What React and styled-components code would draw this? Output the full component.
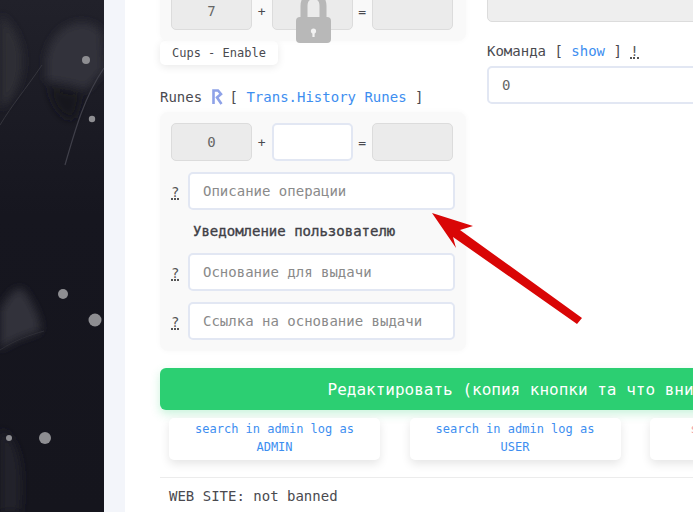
import React from 'react';
import styled, { createGlobalStyle } from 'styled-components';

const GlobalStyle = createGlobalStyle`
  html, body {
    margin: 0;
    height: 512px;
    overflow: hidden;
    background: #fff;
  }
  body {
    font-family: "DejaVu Sans Mono", "Liberation Mono", monospace;
    font-size: 14px;
    color: #4a4a4f;
  }
  * {
    box-sizing: border-box;
  }
`;

const Page = styled.div`
  position: relative;
  display: flex;
  width: 693px;
  height: 512px;
  overflow: hidden;
`;

const Backdrop = styled.div`
  flex: 0 0 104px;
  height: 512px;
  background: #14141d;

  svg {
    display: block;
  }
`;

const Gutter = styled.div`
  flex: 0 0 21px;
  background: #f3f5fa;
`;

const Content = styled.main`
  flex: 0 0 730px;
  margin-left: 35px;
  margin-top: -19px;
`;

const Columns = styled.div`
  display: flex;
  gap: 21px;
`;

const LeftColumn = styled.div`
  flex: 0 0 306px;
`;

const RightColumn = styled.div`
  flex: 1;
  padding-top: 3px;
`;

const Card = styled.section`
  position: relative;
  padding: 11px 11px 11px 11px;
  background: #f9f9f9;
  border-radius: 8px;
  box-shadow: 0 0 6px rgba(0, 0, 0, 0.03);
`;

const SumRow = styled.div`
  display: flex;
  align-items: center;
`;

const SumSign = styled.span`
  flex: 0 0 19.5px;
  text-align: center;
  font-size: 13px;
`;

const SumField = styled.div`
  flex: 0 0 81px;
  height: 38px;
  display: flex;
  align-items: center;
  justify-content: center;
  border-radius: 5px;
  border: ${props => (props.$editable ? '2px solid #e2e7f3' : '1px solid #dcdcdc')};
  background: ${props => (props.$editable ? '#fff' : '#ebebeb')};
  color: #666;
`;

const Lock = styled.svg`
  position: absolute;
  left: 135px;
  top: 0;
  width: 37px;
  height: 63px;
`;

const Tag = styled.div`
  display: inline-block;
  height: 24px;
  padding: 0 12px;
  line-height: 24px;
  font-size: 12px;
  background: #fff;
  border-radius: 5px;
  box-shadow: 0 2px 8px rgba(0, 0, 0, 0.09);
`;

const SectionLabel = styled.div`
  display: flex;
  align-items: center;
  height: 20px;
  margin-top: 22px;
  margin-bottom: 5px;
  white-space: pre;
  font-size: 14px;
`;

const FieldLabel = styled(SectionLabel)`
  margin-top: 19px;
  margin-bottom: 5px;
`;

const RuneIcon = styled.svg`
  width: 12px;
  height: 16px;
  margin-right: 7px;
`;

const TextLink = styled.a`
  color: #3d8ef0;
  text-decoration: none;
`;

const Hint = styled.span`
  display: inline-block;
  height: 15px;
  line-height: 14px;
  border-bottom: 2px dotted #555;
  font-size: 14px;
  color: #555;
`;

const HintRow = styled.div`
  display: flex;
  align-items: center;
  margin-top: ${props => props.$top || 0}px;
`;

const HintSlot = styled.div`
  flex: 0 0 17px;
  margin-top: 1px;
`;

const TextField = styled.div`
  flex: 1;
  height: 38px;
  display: flex;
  align-items: center;
  padding: 0 13px;
  background: #fff;
  border: 2px solid #e2e7f3;
  border-radius: 5px;
  color: ${props => (props.$filled ? '#666' : '#8a8a8a')};
  white-space: nowrap;
`;

const LockedField = styled.div`
  height: 38px;
  background: #eee;
  border: 1px solid #dcdcdc;
  border-radius: 5px;
`;

const Subtitle = styled.div`
  margin: 12px 0 13px 22px;
  height: 18px;
  line-height: 18px;
  font-size: 14px;
  color: #404046;
  -webkit-text-stroke: 0.35px #404046;
`;

const Submit = styled.button`
  display: block;
  width: 100%;
  height: 42px;
  margin-top: 17px;
  border: 0;
  border-radius: 6px;
  background: #2ccf72;
  color: #fff;
  font-family: inherit;
  font-size: 16px;
  box-shadow: 0 4px 10px rgba(44, 207, 114, 0.25);
`;

const SearchRow = styled.div`
  display: flex;
  gap: 29.5px;
  padding: 8px 9px 0;
`;

const SearchButton = styled.div`
  flex: 0 0 211px;
  height: 42px;
  padding-top: 2px;
  text-align: center;
  font-size: 12px;
  line-height: 18px;
  background: #fff;
  border-radius: 5px;
  color: ${props => (props.$danger ? '#f0a0a8' : '#3d8ef0')};
  box-shadow: 0 4px 10px rgba(0, 0, 0, 0.1);
`;

const Divider = styled.hr`
  margin: 17px 0 0;
  border: 0;
  border-top: 1px solid #ececec;
`;

const Status = styled.div`
  padding: 9px 9px 0;
  line-height: 18px;
  font-size: 14px;
`;

const Arrow = styled.svg`
  position: absolute;
  left: 425px;
  top: 205px;
  width: 165px;
  height: 125px;
`;

const Speck = ({ cx, cy, r }) => <circle cx={cx} cy={cy} r={r} fill="#8e8e92" />;

export default function App() {
  return (
    <Page>
      <GlobalStyle />
      <Backdrop>
        <svg width="104" height="512" viewBox="0 0 104 512">
          <defs>
            <filter id="soft" x="-40%" y="-40%" width="180%" height="180%">
              <feGaussianBlur stdDeviation="4" />
            </filter>
            <linearGradient id="shade" x1="0" y1="0" x2="0" y2="1">
              <stop offset="0" stopColor="#21212a" />
              <stop offset="0.42" stopColor="#16161f" />
              <stop offset="1" stopColor="#15151d" />
            </linearGradient>
          </defs>
          <rect width="104" height="512" fill="url(#shade)" />
          <g filter="url(#soft)">
            <path d="M0 15 C15 25 25 45 22 70 C18 95 8 105 0 108 Z" fill="#2d2d36" />
            <path d="M46 60 C50 25 85 12 102 32 L104 70 L86 90 C70 82 56 84 46 80 Z" fill="#32323b" />
            <path d="M48 85 C60 90 75 95 82 92 L75 118 C62 122 52 105 48 85 Z" fill="#15151c" />
            <path d="M0 310 C8 295 16 285 24 290 C34 305 42 320 40 332 C25 336 10 342 0 350 Z" fill="#33333b" />
            <path d="M0 430 C15 435 25 460 20 512 L0 512 Z" fill="#22222a" />
          </g>
          <path d="M0 125 C12 105 25 90 42 65" stroke="#35353d" strokeWidth="1" fill="none" />
          <path d="M65 165 C75 130 85 95 104 68" stroke="#40404a" strokeWidth="1.2" fill="none" />
          <path d="M0 350 C15 340 30 335 44 331" stroke="#2e2e36" strokeWidth="1" fill="none" />
          <Speck cx={86} cy={60} r={4} />
          <Speck cx={92} cy={119} r={3.2} />
          <Speck cx={63} cy={294} r={5} />
          <Speck cx={95} cy={320} r={6.5} />
          <Speck cx={9} cy={438} r={3} />
          <Speck cx={45} cy={438} r={6} />
        </svg>
      </Backdrop>
      <Gutter />
      <Content>
        <Columns>
          <LeftColumn>
            <Card>
              <SumRow>
                <SumField>7</SumField>
                <SumSign>+</SumSign>
                <SumField />
                <SumSign>=</SumSign>
                <SumField />
              </SumRow>
              <Lock viewBox="0 0 37 63">
                <path d="M9 42 V25 C9 11 28 11 28 25 V42" fill="none" stroke="#b8b8b8" strokeWidth="7" />
                <rect x="1" y="36" width="35" height="26" rx="4" fill="#b8b8b8" />
                <circle cx="18.5" cy="50" r="2.6" fill="#f2f2f2" />
                <rect x="17.4" y="50" width="2.2" height="6" fill="#f2f2f2" />
              </Lock>
            </Card>
            <Tag>Cups - Enable</Tag>
            <SectionLabel>
              {'Runes '}
              <RuneIcon viewBox="0 0 12 16">
                <path d="M2.5 15 V1.5 H7 L10 5 L6 8.5 L10.5 15" fill="none" stroke="#8ea2e8" strokeWidth="2.6" />
              </RuneIcon>
              {'[ '}
              <TextLink>Trans.History Runes</TextLink>
              {' ]'}
            </SectionLabel>
            <Card>
              <SumRow>
                <SumField>0</SumField>
                <SumSign>+</SumSign>
                <SumField $editable />
                <SumSign>=</SumSign>
                <SumField />
              </SumRow>
              <HintRow $top={11}>
                <HintSlot><Hint>?</Hint></HintSlot>
                <TextField>Описание операции</TextField>
              </HintRow>
              <Subtitle>Уведомление пользователю</Subtitle>
              <HintRow>
                <HintSlot><Hint>?</Hint></HintSlot>
                <TextField>Основание для выдачи</TextField>
              </HintRow>
              <HintRow $top={11}>
                <HintSlot><Hint>?</Hint></HintSlot>
                <TextField>Ссылка на основание выдачи</TextField>
              </HintRow>
            </Card>
          </LeftColumn>
          <RightColumn>
            <LockedField />
            <FieldLabel>
              {'Команда [ '}
              <TextLink>show</TextLink>
              {' ] '}
              <Hint>!</Hint>
            </FieldLabel>
            <TextField $filled>0</TextField>
          </RightColumn>
        </Columns>
        <Submit>Редактировать (копия кнопки та что внизу)</Submit>
        <SearchRow>
          <SearchButton>search in admin log as<br />ADMIN</SearchButton>
          <SearchButton>search in admin log as<br />USER</SearchButton>
          <SearchButton $danger>search in ban logs</SearchButton>
        </SearchRow>
        <Divider />
        <Status>WEB SITE: not banned</Status>
      </Content>
      <Arrow viewBox="0 0 165 125">
        <path d="M7 8 L48 21 L35 25 L157 113 L152 119 L28 32 L31 43 Z" fill="#d90606" />
      </Arrow>
    </Page>
  );
}
